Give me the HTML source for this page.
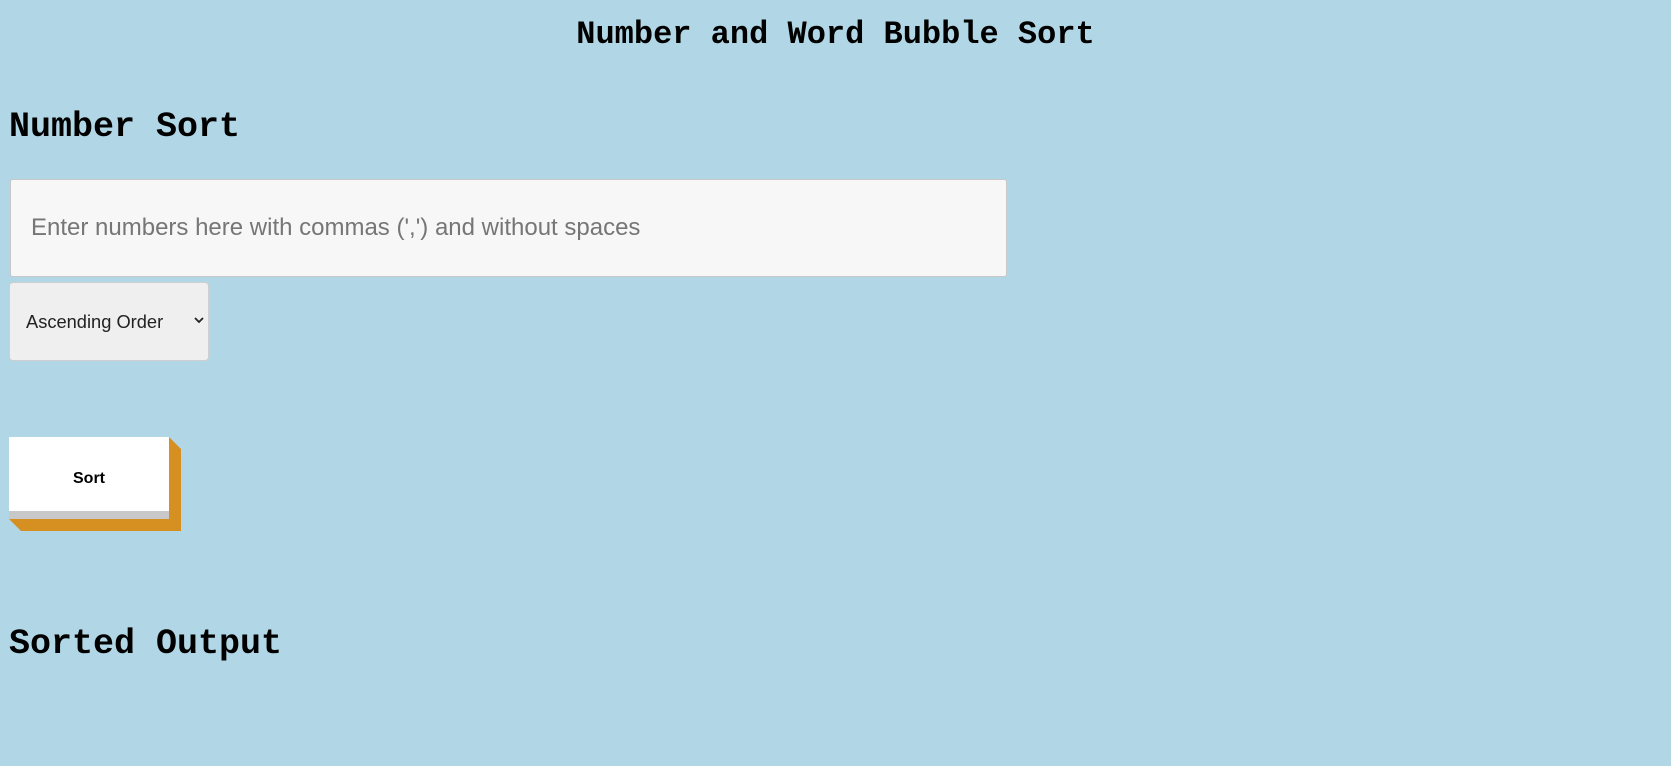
<!DOCTYPE html>
<html><head><style>
body{margin:0;width:1671px;height:766px;background:#b1d6e5;position:relative;overflow:hidden;font-family:"Liberation Sans",sans-serif}
.c{font-family:"Liberation Mono",monospace;font-weight:bold;color:#000;position:absolute;margin:0;white-space:nowrap}
</style></head><body>
<div class="c" style="left:0;width:1671px;text-align:center;top:17px;font-size:32px;line-height:36px">Number and Word Bubble Sort</div>
<div class="c" style="left:9px;top:105px;font-size:35px;line-height:44px">Number Sort</div>
<div style="position:absolute;left:10px;top:179px;width:995px;height:96px;background:#f7f7f7;border:1px solid #c8c8c8;border-radius:3px"></div>
<div style="position:absolute;left:31px;top:213px;font-size:24px;color:#767676;line-height:30px">Enter numbers here with commas (',') and without spaces</div>
<div style="position:absolute;left:9px;top:282px;width:198px;height:77px;background:#efefef;border:1px solid #cfcfcf;border-radius:4px"></div>
<div style="position:absolute;left:26px;top:311px;font-size:18.3px;color:#222;line-height:22px">Ascending Order</div>
<svg style="position:absolute;left:194px;top:316px" width="10" height="8"><path d="M1 2 L5 6 L9 2" stroke="#222" stroke-width="1.8" fill="none"/></svg>
<svg style="position:absolute;left:9px;top:437px" width="173" height="95"><polygon points="160,0 172,12 172,94 12,94 0,82 160,82" fill="#d69022"/><rect x="0" y="74" width="160" height="8" fill="#c8c8c8"/><rect x="0" y="0" width="160" height="74" fill="#fff"/></svg>
<div style="position:absolute;left:9px;top:469px;width:160px;text-align:center;font-size:16px;font-weight:bold;line-height:20px">Sort</div>
<div class="c" style="left:9px;top:622px;font-size:35px;line-height:44px">Sorted Output</div>
</body></html>
